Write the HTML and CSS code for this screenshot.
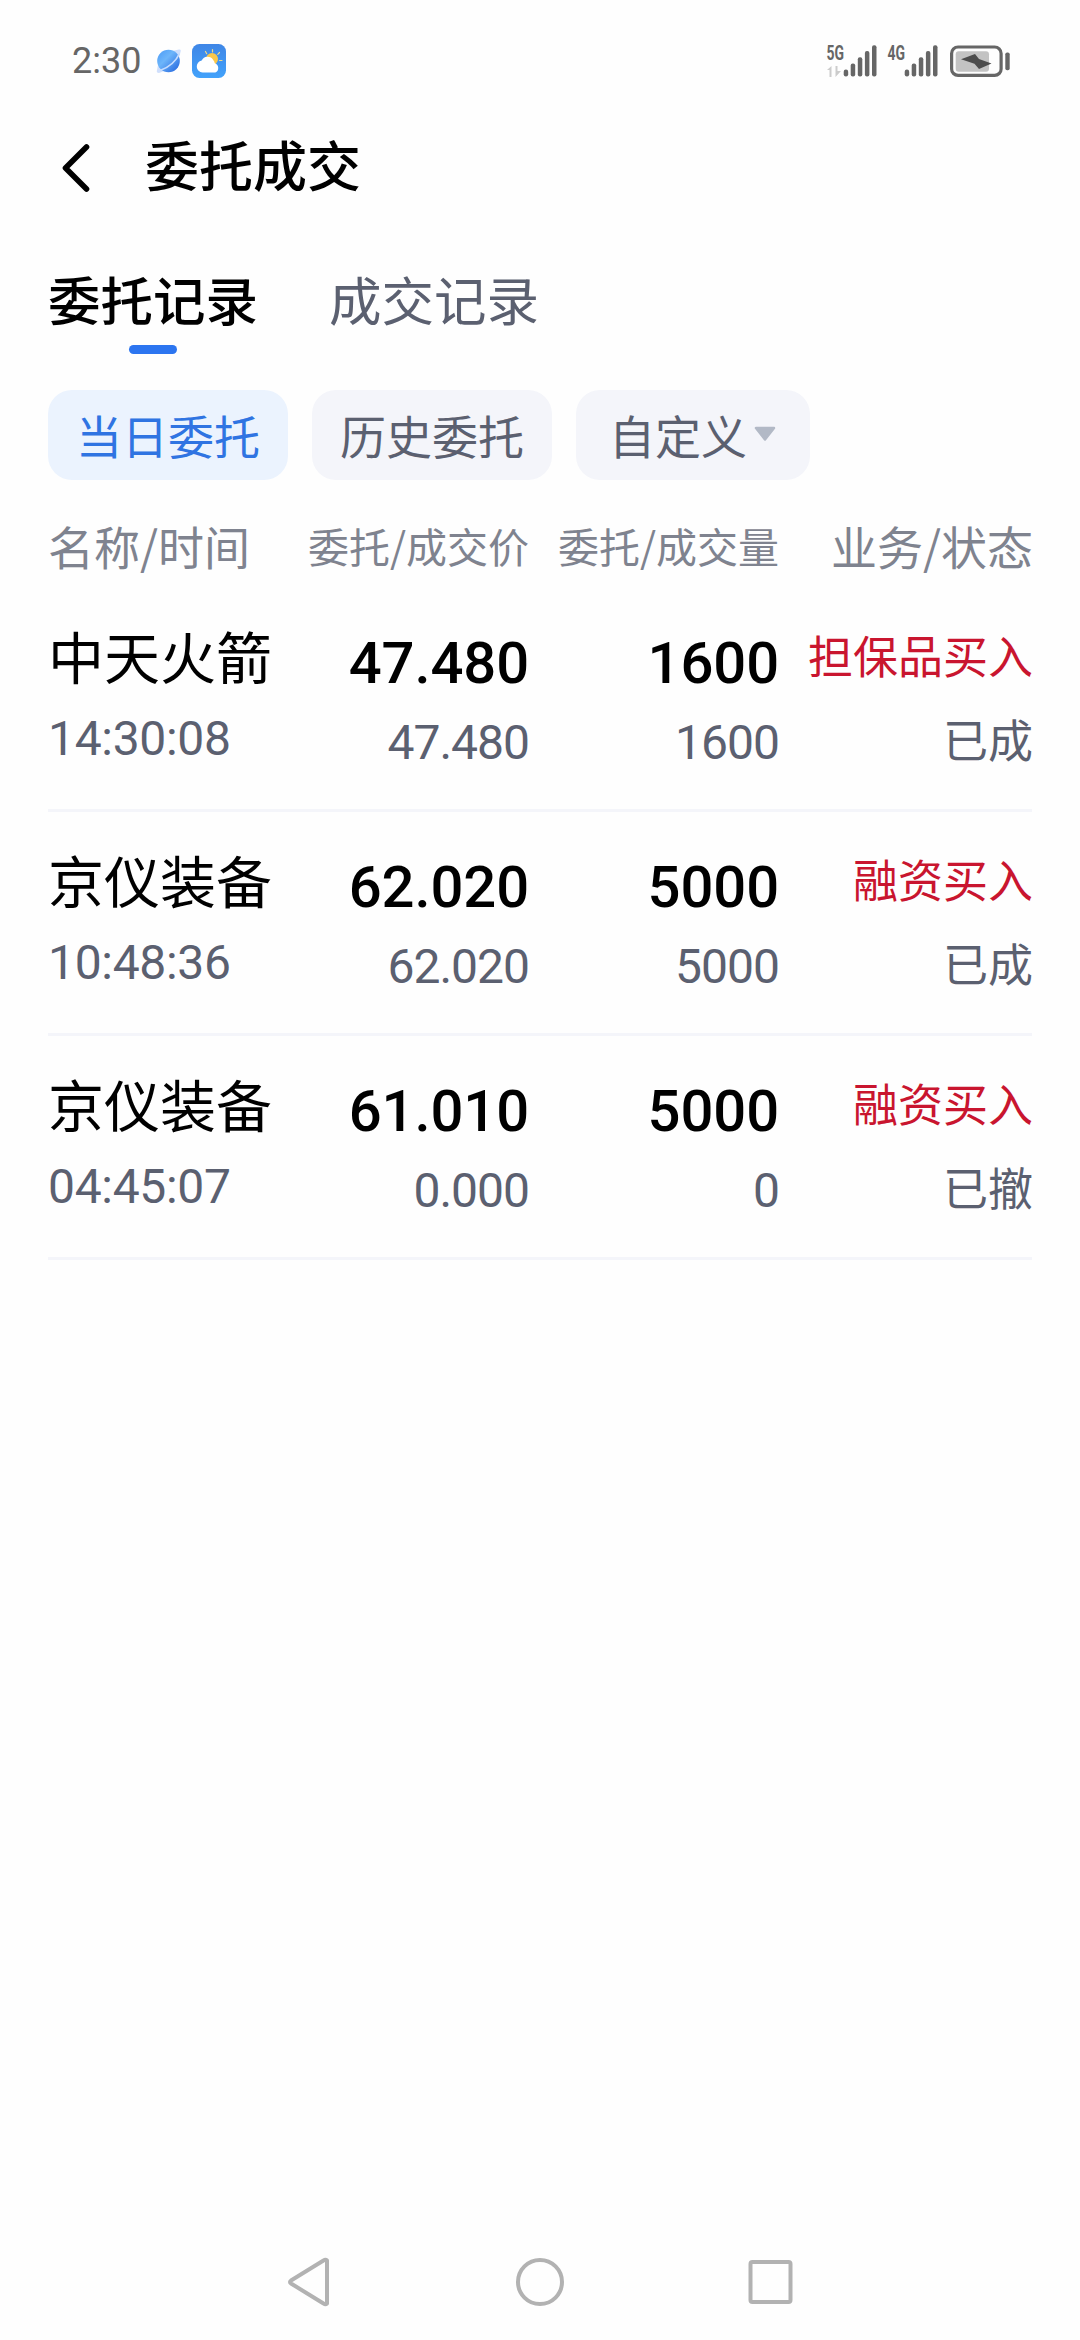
FILE: index.html
```
<!DOCTYPE html>
<html lang="zh-CN">
<head>
    <meta charset="UTF-8">
    <meta name="viewport" content="width=device-width, initial-scale=1.0">
    <title>委托成交</title>
    <link rel="stylesheet" href="styles.css">
</head>
<body>
    <div class="screen">
        <div class="status-bar">
            <span class="clock">2:30</span>
            <svg class="planet" width="26" height="26" viewBox="0 0 26 26">
                <defs>
                    <linearGradient id="planetFill" x1="0" y1="0" x2="1" y2="1">
                        <stop offset="0" stop-color="#4a9af6"/>
                        <stop offset="0.4" stop-color="#6db5fa"/>
                        <stop offset="1" stop-color="#1f60dc"/>
                    </linearGradient>
                </defs>
                <path d="M16 3L23 1.500Q25.500 1 24.500 4L23 9L8 23L3 25Q0 25 1 22L2 17z" fill="#cfdffc"/>
                <circle cx="12.500" cy="13" r="11.300" fill="url(#planetFill)"/>
                <path d="M4 22.500Q18 17.500 23.500 5.500" fill="none" stroke="#c5dcff" stroke-width="1.800"/>
            </svg>
            <svg class="weather" width="34" height="34" viewBox="0 0 34 34">
                <defs>
                    <linearGradient id="skyFill" x1="0" y1="0" x2="0" y2="1">
                        <stop offset="0" stop-color="#3f86e6"/>
                        <stop offset="1" stop-color="#42a2fb"/>
                    </linearGradient>
                </defs>
                <rect width="34" height="34" rx="7.500" fill="url(#skyFill)"/>
                <path d="M13.500 7.500l1.200 2.200M20.500 5.500v2.500M27.500 8.500l-1.700 1.800M27.500 16.500h2.500" stroke="#ecd98c" stroke-width="1.200" stroke-linecap="round"/>
                <circle cx="20" cy="15" r="6" fill="#fbc84a"/>
                <path d="M10.500 28.500a6 6 0 0 1-.8-11.900 6.500 6.500 0 0 1 11.500-.6 6.500 6.500 0 0 1 1.600 3.200 5 5 0 0 1 .5 9.300z" fill="#fff"/>
            </svg>
            <svg class="system-icons" width="190" height="36" viewBox="0 0 190 36" fill="#666">
                <text class="network" x="6.500" y="16.500" textLength="17.500" lengthAdjust="spacingAndGlyphs">5G</text>
                <path d="M7 27l4.500-4v11h-2v-7zM15.500 23v11l5.500-6h-3.500v-5z" fill="#ccc"/>
                <rect x="23.700" y="26.500" width="4.500" height="7" rx="2.200"/>
                <rect x="30.700" y="20.500" width="4.500" height="13" rx="2"/>
                <rect x="37.800" y="14.200" width="4.500" height="19.300" rx="2"/>
                <rect x="44.900" y="8" width="4.500" height="25.500" rx="2"/>
                <rect x="52" y="2.300" width="4.500" height="31.200" rx="2"/>
                <text class="network" x="67.500" y="16.500" textLength="17.500" lengthAdjust="spacingAndGlyphs">4G</text>
                <rect x="84.700" y="26.500" width="4.500" height="7" rx="2.200"/>
                <rect x="91.700" y="20.500" width="4.500" height="13" rx="2"/>
                <rect x="98.800" y="14.200" width="4.500" height="19.300" rx="2"/>
                <rect x="105.900" y="8" width="4.500" height="25.500" rx="2"/>
                <rect x="113" y="2.300" width="4.500" height="31.200" rx="2"/>
                <rect x="131.600" y="4" width="49.500" height="28.400" rx="6.500" fill="none" stroke="#666" stroke-width="3.200"/>
                <rect x="135.700" y="8.300" width="33.300" height="20.400" rx="3" fill="#c3c3c3"/>
                <path d="M141 16.300L155 11L159 16L171.500 20.500L159 26L154.500 20.800z" class="bolt"/>
                <rect x="185.300" y="9.500" width="4.400" height="17.800" rx="1.800"/>
            </svg>
        </div>

        <div class="header">
            <svg class="back" width="30" height="52" viewBox="0 0 30 52">
                <path d="M25.500 5L4.500 26 25.500 47" fill="none" stroke="#000" stroke-width="5.600" stroke-linecap="round" stroke-linejoin="round"/>
            </svg>
            <h1>委托成交</h1>
        </div>

        <div class="tabs">
            <div class="tab active">委托记录</div>
            <div class="tab">成交记录</div>
        </div>

        <div class="filters">
            <div class="chip active">当日委托</div>
            <div class="chip">历史委托</div>
            <div class="chip custom">
                自定义
                <svg width="22" height="16" viewBox="0 0 22 16">
                    <path d="M2 2h18L11 13.500z" fill="#b2b9c6" stroke="#b2b9c6" stroke-width="2.500" stroke-linejoin="round"/>
                </svg>
            </div>
        </div>

        <div class="columns">
            <div>名称/时间</div>
            <div class="small">委托/成交价</div>
            <div class="small">委托/成交量</div>
            <div>业务/状态</div>
        </div>

        <div class="order">
            <div>
                <p class="name">中天火箭</p>
                <p class="time">14:30:08</p>
            </div>
            <div class="numbers">
                <p class="main">47.480</p>
                <p class="sub">47.480</p>
            </div>
            <div class="numbers">
                <p class="main">1600</p>
                <p class="sub">1600</p>
            </div>
            <div class="state">
                <p class="buy">担保品买入</p>
                <p>已成</p>
            </div>
        </div>

        <div class="order">
            <div>
                <p class="name">京仪装备</p>
                <p class="time">10:48:36</p>
            </div>
            <div class="numbers">
                <p class="main">62.020</p>
                <p class="sub">62.020</p>
            </div>
            <div class="numbers">
                <p class="main">5000</p>
                <p class="sub">5000</p>
            </div>
            <div class="state">
                <p class="buy">融资买入</p>
                <p>已成</p>
            </div>
        </div>

        <div class="order">
            <div>
                <p class="name">京仪装备</p>
                <p class="time">04:45:07</p>
            </div>
            <div class="numbers">
                <p class="main">61.010</p>
                <p class="sub">0.000</p>
            </div>
            <div class="numbers">
                <p class="main">5000</p>
                <p class="sub">0</p>
            </div>
            <div class="state">
                <p class="buy">融资买入</p>
                <p>已撤</p>
            </div>
        </div>

        <div class="nav-bar">
            <svg width="48" height="52" viewBox="0 0 48 52">
                <path d="M42 4.500V47.500Q40.500 49 38.500 47.500L6 27.500Q4 26 6 24.500L38.500 4.500Q40.500 3 42 4.500z"/>
            </svg>
            <svg width="52" height="52" viewBox="0 0 52 52">
                <circle cx="26" cy="26" r="22"/>
            </svg>
            <svg width="48" height="52" viewBox="0 0 48 52">
                <rect x="3.500" y="6" width="40" height="40" rx="2"/>
            </svg>
        </div>
    </div>
</body>
</html>
```
FILE: styles.css
```
body {
    margin: 0;
    background-color: #fefefe;
    color: #000;
    font-family: "Noto Sans CJK SC", sans-serif;
}
.screen {
    display: flex;
    flex-direction: column;
    box-sizing: border-box;
    width: 1080px;
    height: 2340px;
    padding: 0 48px;
}
svg {
    display: block;
    flex: none;
}
h1, p {
    margin: 0;
}
.status-bar {
    display: flex;
    align-items: center;
    height: 122px;
    padding: 0 22px 0 24px;
}
.clock {
    width: 84px;
    font-family: Roboto, sans-serif;
    font-size: 36px;
    line-height: 42px;
    color: #666;
}
.weather {
    margin-left: 10px;
}
.system-icons {
    margin-left: auto;
    overflow: visible;
}
.network {
    font-family: Roboto, sans-serif;
    font-size: 20px;
    font-weight: 700;
}
.bolt {
    fill: #4d4d4d;
}
.header {
    display: flex;
    align-items: center;
    height: 92px;
    padding-left: 13px;
}
.header h1 {
    margin-left: 54px;
    padding-bottom: 9px;
    font-size: 54px;
    font-weight: 500;
    line-height: 60px;
}
.tabs {
    display: flex;
    gap: 71px;
    margin-top: 54px;
    font-size: 52.5px;
    line-height: 60px;
}
.tab {
    color: #5b6070;
}
.tab.active {
    color: #000;
    font-weight: 500;
}
.tab.active::after {
    content: "";
    display: block;
    width: 48px;
    height: 9px;
    margin: 17px auto 0;
    border-radius: 4.5px;
    background-color: #2c75f0;
}
.filters {
    display: flex;
    gap: 24px;
    margin-top: 36px;
}
.chip {
    height: 90px;
    padding: 0 28px;
    border-radius: 24px;
    background-color: #f4f5fa;
    color: #5b6070;
    font-size: 46px;
    line-height: 89px;
}
.chip.active {
    background-color: #ebf3fe;
    color: #2f74e2;
}
.chip.custom {
    display: flex;
    gap: 7px;
    padding: 0 34px 0 33px;
}
.chip.custom svg {
    margin-top: 36px;
}
.columns, .order {
    display: grid;
    grid-template-columns: 231px 250px 250px 254px;
    white-space: nowrap;
}
.columns {
    margin: 35px 0 13px;
    color: #7f838f;
    font-size: 46px;
    line-height: 60px;
}
.columns div + div {
    text-align: right;
}
.columns .small {
    font-size: 41px;
}
.order {
    box-sizing: border-box;
    height: 224px;
    padding-top: 25px;
    border-bottom: 3px solid #f4f5fa;
    line-height: 84px;
}
.name {
    font-size: 56px;
}
.time, .numbers {
    font-family: Roboto, sans-serif;
}
.time, .sub {
    color: #5b6070;
    font-size: 48px;
}
.time {
    letter-spacing: -0.3px;
}
.numbers {
    padding-top: 11px;
    line-height: 79px;
    text-align: right;
}
.main {
    font-size: 58px;
    font-weight: 500;
    letter-spacing: -0.1px;
}
.sub {
    letter-spacing: -1px;
}
.state {
    color: #5b6070;
    font-size: 45px;
    text-align: right;
}
.buy {
    color: #c9152f;
}
.nav-bar {
    display: flex;
    justify-content: space-between;
    margin-top: auto;
    padding: 0 237px 32px;
}
.nav-bar svg {
    fill: none;
    stroke: #b2b2b2;
    stroke-width: 4;
    stroke-linejoin: round;
}
```
